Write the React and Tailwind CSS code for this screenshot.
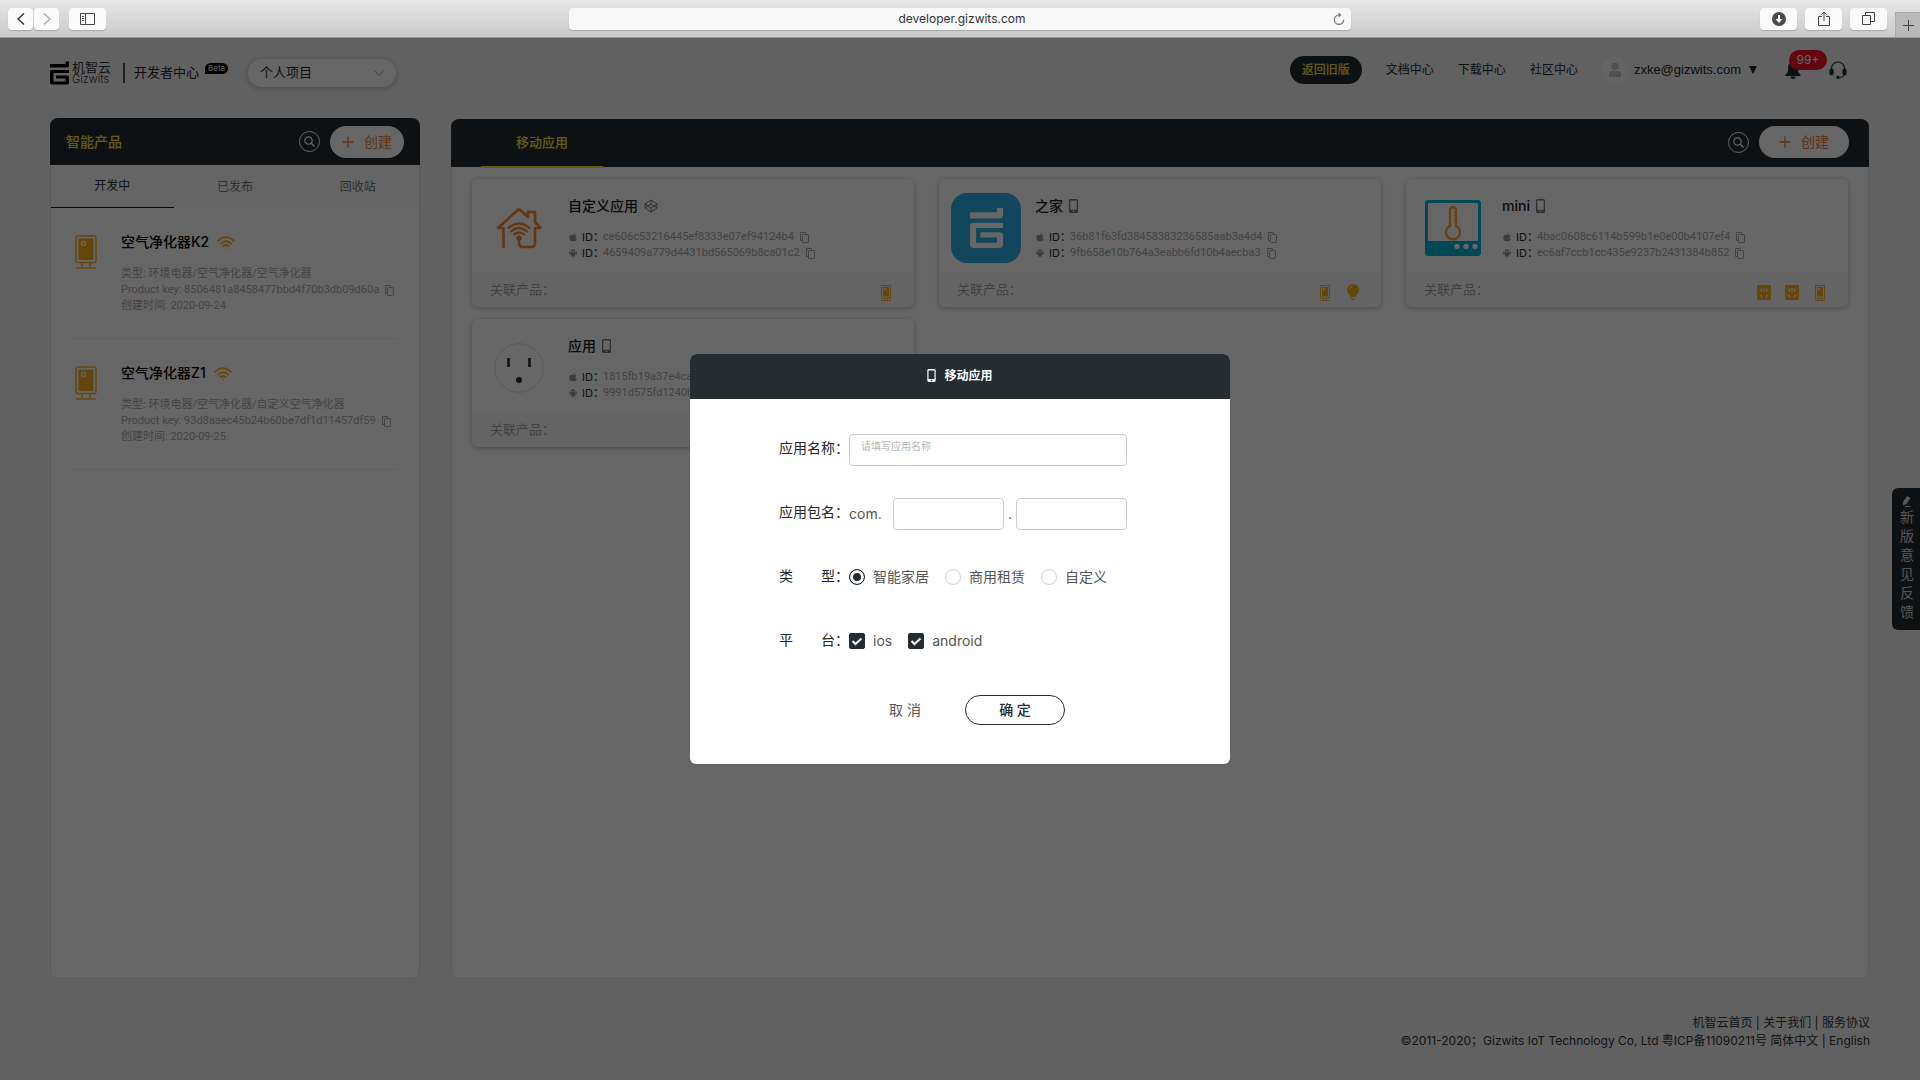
import React from "react";
import { FaApple } from "react-icons/fa";
import { AiFillAndroid } from "react-icons/ai";

const products = [
  { name: "空气净化器K2", type: "环境电器/空气净化器/空气净化器", key: "8506481a8458477bbd4f70b3db09d60a", date: "2020-09-24" },
  { name: "空气净化器Z1", type: "环境电器/空气净化器/自定义空气净化器", key: "93d8aaec45b24b60be7df1d11457df59", date: "2020-09-25" },
];

const apps = [
  { name: "自定义应用", art: HouseArt, badge: CustomIcon, ios: "ce606c53216445ef8333e07ef94124b4", android: "4659409a779d4431bd565069b8ca01c2", linked: [PurifierMini] },
  { name: "之家", art: GizwitsArt, badge: PhoneIcon, ios: "36b81f63fd38458383236585aab3a4d4", android: "9fb658e10b764a3eabb6fd10b4aecba3", linked: [PurifierMini, BulbMini] },
  { name: "mini", art: ThermoArt, badge: PhoneIcon, ios: "4bac0608c6114b599b1e0e00b4107ef4", android: "ec6af7ccb1cc435e9237b2431384b852", linked: [PanelMini, PanelMini, PurifierMini] },
  { name: "应用", art: SocketArt, badge: PhoneIcon, ios: "1815fb19a37e4ca7b02c6d1f8e935a47", android: "9991d575fd1240b6a83e5c7d20f4b916", linked: [] },
];

function GMark({ className }) {
  return (
    <svg viewBox="0 0 38 46" className={className} fill="currentColor" aria-hidden="true">
      <path d="M0 5h31V0h7v8q0 4-4 4H0z" />
      <path d="M4 17h34v6H7v17h24v-6H12v-6h22q4 0 4 4v10q0 4-4 4H4q-4 0-4-4V21q0-4 4-4z" />
    </svg>
  );
}

function HouseArt() {
  return (
    <svg viewBox="0 0 46 42" className="h-[42px] w-[46px]" fill="none" stroke="#fc8427" strokeWidth="2.600" strokeLinecap="round" strokeLinejoin="round" aria-hidden="true">
      <path d="M7.500 40V21H2L23 2l9 8V5h7v10l5.500 6H39v15q0 4-4 4h-8q-4 0-4-4v-5" />
      <path d="M12.500 21q10.500-9 21 0M15 24.500q8-7 16 0M18 27.500q5-4 10 0" strokeWidth="2.200" />
      <circle cx="23" cy="31" r="2" fill="#fc8427" strokeWidth="1.500" />
    </svg>
  );
}

function GizwitsArt() {
  return (
    <div className="flex size-[70px] items-center justify-center rounded-2xl bg-[#2bb0e8] text-white">
      <GMark className="h-10 w-[33px]" />
    </div>
  );
}

function ThermoArt() {
  return (
    <svg viewBox="0 0 56 56" className="size-14" aria-hidden="true">
      <rect width="56" height="56" rx="3" fill="#00b4d8" />
      <rect x="3" y="3" width="50" height="38" rx="1.500" fill="#fff" />
      <path d="M25 10a3 3 0 0 1 6 0v16a7 7 0 1 1-6 0z" fill="none" stroke="#f9a72b" strokeWidth="2.400" />
      <path d="M29 12h2M29 15h2M29 18h2M29 21h2" stroke="#f9a72b" strokeWidth="1.500" />
      <g fill="#fff"><circle cx="32" cy="46.500" r="2.700" /><circle cx="41" cy="46.500" r="2.700" /><circle cx="50" cy="46.500" r="2.700" /></g>
    </svg>
  );
}

function SocketArt() {
  return (
    <svg viewBox="0 0 50 50" className="size-[50px]" aria-hidden="true">
      <circle cx="25" cy="25" r="24.300" fill="#fff" stroke="#dcdcdc" />
      <path d="M14.500 15v9M35.500 15v9" stroke="#252c32" strokeWidth="2.600" />
      <circle cx="25" cy="37" r="3" fill="#252c32" />
    </svg>
  );
}

function PhoneIcon({ className = "h-3.5 w-[9px] text-[#777]" }) {
  return (
    <svg viewBox="0 0 9 14" className={className} fill="currentColor" aria-hidden="true">
      <path fillRule="evenodd" d="M1.500 0h6Q9 0 9 1.500v11Q9 14 7.500 14h-6Q0 14 0 12.500v-11Q0 0 1.500 0zM1.300 1.500v9.300h6.400V1.500zM4.500 11.600a.8.8 0 1 0 0 1.600.8.8 0 0 0 0-1.600z" />
    </svg>
  );
}

function CustomIcon() {
  return (
    <svg viewBox="0 0 14 14" className="size-3.5" fill="none" stroke="#777" strokeWidth="1" strokeLinejoin="round" aria-hidden="true">
      <path d="M7 1l6 4v4l-6 4-6-4V5zM7 1v4M7 9v4M1 5l6 4 6-4M1 9l6-4 6 4" />
    </svg>
  );
}

function Purifier() {
  return (
    <svg viewBox="0 0 22 34" className="h-[34px] w-[22px]" fill="none" stroke="#f9b233" strokeWidth="1.500" aria-hidden="true">
      <rect x="1" y="1" width="20" height="26.500" rx="2" />
      <rect x="3.500" y="3.500" width="15" height="21.500" rx="1" fill="#f9b01e" stroke="none" />
      <circle cx="8.500" cy="8.500" r="2.300" fill="#fff4d8" stroke="#fff" strokeWidth="1" />
      <circle cx="8.500" cy="8.500" r="1.200" fill="#f9b01e" stroke="none" />
      <path d="M7 28v4M15 28v4M1 33h20" />
    </svg>
  );
}

function PurifierMini() {
  return (
    <svg viewBox="0 0 10 16" className="h-4 w-2.5" aria-hidden="true">
      <rect x=".5" y=".5" width="9" height="12.500" fill="none" stroke="#f9b233" />
      <path d="M2 2h6v9.500H2z" fill="#f9b01e" />
      <path d="M3 3h1.500v2H3z" fill="#fff" />
      <path d="M3.500 13v2.500M6.500 13v2.500M0 15.500h10" stroke="#f9b233" />
    </svg>
  );
}

function BulbMini() {
  return (
    <svg viewBox="0 0 12 17" className="h-[17px] w-3" aria-hidden="true">
      <path d="M6 0a6 6 0 0 1 6 6c0 2.500-2 4-3.500 7h-5C2 10 0 8.500 0 6a6 6 0 0 1 6-6z" fill="#f9b01e" />
      <path d="M2.500 5Q3 3 5 2.500" stroke="#fff" fill="none" />
      <path d="M4 14h4v1L7 16.500H5L4 15z" fill="#ccc" />
    </svg>
  );
}

function PanelMini() {
  return (
    <svg viewBox="0 0 14 15" className="h-[15px] w-3.5" aria-hidden="true">
      <rect width="14" height="15" rx="1" fill="#f9b01e" />
      <path d="M3 5l2-2v4zM11 5L9 3v4zM6.500 3v4M7.500 3v4" fill="#fff3d0" stroke="#fff3d0" strokeWidth=".5" />
      <path d="M3.500 9.500l1.500 3M10.500 9.500l-1.500 3" stroke="#fff3d0" strokeWidth="1.500" />
    </svg>
  );
}

function CopyIcon() {
  return (
    <svg viewBox="0 0 9 11" className="h-[11px] w-[9px]" fill="none" stroke="currentColor" strokeWidth="1" aria-hidden="true">
      <path d="M2.500 8.500h-2v-8h5v1" />
      <rect x="2.500" y="2.500" width="6" height="8" rx=".7" />
    </svg>
  );
}

function WifiIcon() {
  return (
    <svg viewBox="0 0 18 13" className="h-[13px] w-[18px]" fill="none" stroke="#f9b01e" strokeWidth="1.700" strokeLinecap="round" aria-hidden="true">
      <path d="M1 4.800q8-7.500 16 0M3.800 7.600q5.200-4.700 10.400 0M6.500 10q2.500-2 5 0" />
      <circle cx="9" cy="12" r=".8" fill="#f9b01e" stroke="none" />
    </svg>
  );
}

function SearchButton() {
  return (
    <button type="button" aria-label="搜索" className="flex size-[21px] items-center justify-center rounded-full border border-white text-white">
      <svg viewBox="0 0 11 11" className="size-[11px]" fill="none" stroke="currentColor" strokeWidth="1.200" aria-hidden="true">
        <circle cx="4.500" cy="4.500" r="3.700" />
        <path d="M7.200 7.200L10.500 10.500" strokeWidth="1.500" />
      </svg>
    </button>
  );
}

function CreateButton({ className }) {
  return (
    <button type="button" className={`flex h-8 items-center justify-center gap-2.5 rounded-full bg-white text-sm text-[#f07d2d] ${className}`}>
      <svg viewBox="0 0 12 12" className="size-3" stroke="currentColor" strokeWidth="1.400" aria-hidden="true"><path d="M6 .5v11M.5 6h11" /></svg>
      创建
    </button>
  );
}

function ChromeButton({ label, className, children }) {
  return (
    <button type="button" aria-label={label} className={`flex h-[22px] items-center justify-center rounded bg-[#fafafa] text-[#444] shadow-[0_1px_1px_#a8a8a8] ${className}`}>
      {children}
    </button>
  );
}

function BrowserBar() {
  return (
    <div className="flex h-[38px] shrink-0 items-center border-b border-[#979797] bg-linear-to-b from-[#e6e6e6] to-[#cacaca]">
      <div className="flex flex-1 items-center">
        <ChromeButton label="后退" className="ml-2 mr-px w-[25px]">
          <svg viewBox="0 0 8 12" className="h-3 w-2" fill="none" stroke="#333" strokeWidth="1.500"><path d="M7 .5L1 6l6 5.500" /></svg>
        </ChromeButton>
        <ChromeButton label="前进" className="w-[25px]">
          <svg viewBox="0 0 8 12" className="h-3 w-2" fill="none" stroke="#aaa" strokeWidth="1.500"><path d="M1 .5L7 6l-6 5.500" /></svg>
        </ChromeButton>
        <ChromeButton label="边栏" className="ml-2.5 w-[37px]">
          <svg viewBox="0 0 15 12" className="h-3 w-[15px]" fill="none" stroke="currentColor"><path d="M.5.500h14v11H.5zM5.500.500v11M2 3.500h2M2 5.500h2M2 7.500h2" /></svg>
        </ChromeButton>
      </div>
      <div className="flex h-[22px] w-[782px] items-center rounded bg-[#f8f8f8] px-1.5 shadow-[0_1px_1px_#a8a8a8]">
        <input aria-label="地址" defaultValue="developer.gizwits.com" className="min-w-0 flex-1 bg-transparent pl-4 text-center text-xs text-[#333] outline-none" />
        <button type="button" aria-label="刷新" className="text-[#777]">
          <svg viewBox="0 0 12 13" className="h-[13px] w-3" fill="none" stroke="currentColor" strokeWidth="1.200"><path d="M7 3H6a4.700 4.700 0 1 0 4.700 4.700" /><path d="M5.500.500L8.500 3l-3 2.500z" fill="currentColor" stroke="none" /></svg>
        </button>
      </div>
      <div className="flex h-full flex-1 items-center justify-end gap-2">
        <ChromeButton label="下载" className="w-[37px]">
          <svg viewBox="0 0 14 14" className="size-3.5"><circle cx="7" cy="7" r="7" fill="#4a4a4a" /><path d="M6 3h2v4h2.500L7 11 3.500 7H6z" fill="#fff" /></svg>
        </ChromeButton>
        <ChromeButton label="分享" className="w-[37px]">
          <svg viewBox="0 0 12 16" className="h-4 w-3" fill="none" stroke="currentColor"><path d="M4 5.500H.5v9h11v-9H8M6 10V1M3.500 3.500L6 1l2.500 2.500" /></svg>
        </ChromeButton>
        <ChromeButton label="标签页" className="w-[37px]">
          <svg viewBox="0 0 13 13" className="size-[13px]" fill="none" stroke="currentColor"><path d="M.5 3.500h8v9h-8zM3.500 3.500v-3h9v9h-4" /></svg>
        </ChromeButton>
        <button type="button" aria-label="新标签页" className="flex h-[25px] w-[25px] items-center justify-center self-end border-l border-t border-[#aaa] bg-[#b9b9b9]">
          <svg viewBox="0 0 11 11" className="size-[11px]" stroke="#444"><path d="M5.500 0v11M0 5.500h11" /></svg>
        </button>
      </div>
    </div>
  );
}

function SiteHeader() {
  return (
    <header className="flex h-20 items-center justify-between pl-[50px] pr-[73px]">
      <div className="flex items-center pb-[11px] text-[#1f2529]">
        <GMark className="h-6 w-[19px] text-black" />
        <div className="ml-[3px] flex flex-col text-[#333]">
          <span className="text-[13px] leading-[13px]">机智云</span>
          <span className="text-[11px] font-light leading-[11px]">Gizwits</span>
        </div>
        <span className="ml-3 h-5 w-0.5 bg-[#555]" />
        <span className="ml-[9px] text-[13px]">开发者中心</span>
        <span className="mb-2 ml-1.5 rounded-full rounded-bl-none bg-black px-[3px] text-[8px] leading-[11px] text-white">Beta</span>
        <div className="relative ml-5 flex items-center">
          <select aria-label="项目" className="h-7 w-[148px] appearance-none rounded-full bg-white px-3 text-[13px] shadow-[0_1px_6px_rgba(0,0,0,0.25)]">
            <option>个人项目</option>
          </select>
          <svg viewBox="0 0 10 6" className="pointer-events-none absolute right-3 h-1.5 w-2.5" fill="none" stroke="#999"><path d="M.5.500L5 5.500 9.500.500" /></svg>
        </div>
      </div>
      <nav className="flex items-center pb-4 text-xs text-[#1f2529]">
        <a href="#old" className="flex h-7 items-center rounded-full bg-[#252c32] px-3 font-medium text-[#fae52d]">返回旧版</a>
        <a href="#docs" className="ml-6">文档中心</a>
        <a href="#downloads" className="ml-6">下载中心</a>
        <a href="#community" className="ml-6">社区中心</a>
        <button type="button" className="ml-6 flex items-center font-['Liberation_Sans',sans-serif] text-[13px]">
          <svg viewBox="0 0 26 26" className="mr-1.5 size-[26px]" aria-hidden="true"><circle cx="13" cy="13" r="13" fill="#fafafa" /><circle cx="13" cy="9.500" r="3.800" fill="#c8c8c8" /><path d="M7 20v-3q0-3 3-3h6q3 0 3 3v3z" fill="#c8c8c8" /></svg>
          <span>zxke@gizwits.com</span>
          <svg viewBox="0 0 8 8" className="ml-2 size-2" fill="currentColor" aria-hidden="true"><path d="M0 0h8L4 8z" /></svg>
        </button>
        <button type="button" aria-label="通知" className="relative ml-7">
          <svg viewBox="0 0 16 17" className="h-[17px] w-4" fill="#252c32" aria-hidden="true"><path d="M8 0a5 5 0 0 1 5 5v4q0 2 2.500 3.500V14H.5v-1.500Q3 11 3 9V5a5 5 0 0 1 5-5zM5.500 14.500h5a2.500 2.500 0 0 1-5 0z" /></svg>
          <span className="absolute -top-3 left-1 flex h-5 w-[38px] items-center justify-center rounded-full bg-[#f5102a] text-xs text-white">99+</span>
        </button>
        <button type="button" aria-label="客服" className="ml-7">
          <svg viewBox="0 0 18 18" className="size-[18px]" fill="none" stroke="#252c32" strokeWidth="1.200" aria-hidden="true"><path d="M2.500 9V7.500a6.500 6.500 0 0 1 13 0V9M15.500 13q-.5 3-5 3.500" /><rect x="1" y="8" width="3" height="6" rx="1.500" fill="#252c32" /><rect x="14" y="8" width="3" height="6" rx="1.500" fill="#252c32" /><circle cx="9" cy="16.500" r="1.200" fill="#252c32" /></svg>
        </button>
      </nav>
    </header>
  );
}

function ProductItem({ item }) {
  return (
    <article className="mx-5 flex h-[131px] border-b border-[#f0f0f0] pl-1 pt-[25px]">
      <div className="w-[46px] shrink-0 pt-[2px]"><Purifier /></div>
      <div>
        <h3 className="flex h-[18px] items-center gap-2 text-sm font-medium text-black">{item.name}<WifiIcon /></h3>
        <div className="mt-[15px] whitespace-nowrap font-['Roboto','Noto_Sans_CJK_SC',sans-serif] text-[11px] leading-4 text-[#aaa]">
          <p>类型: {item.type}</p>
          <p className="flex items-center gap-1.5">Product key: {item.key}<CopyIcon /></p>
          <p>创建时间: {item.date}</p>
        </div>
      </div>
    </article>
  );
}

function ProductPanel() {
  return (
    <section className="flex w-[370px] shrink-0 flex-col rounded-lg border border-[#e2e2e2] bg-white">
      <div className="-mx-px -mt-px flex h-[47px] shrink-0 items-center rounded-t-lg bg-[#252c32] px-4">
        <h2 className="flex-1 text-sm font-medium text-[#fae52d]">智能产品</h2>
        <SearchButton />
        <CreateButton className="ml-2.5 w-[74px]" />
      </div>
      <div role="tablist" className="grid h-[43px] shrink-0 grid-cols-3 bg-[#fcfcfc] text-xs text-[#777]">
        <button type="button" role="tab" aria-selected="true" className="border-b border-[#111] text-[#252c32]">开发中</button>
        <button type="button" role="tab" aria-selected="false">已发布</button>
        <button type="button" role="tab" aria-selected="false">回收站</button>
      </div>
      {products.map((p) => <ProductItem key={p.key} item={p} />)}
    </section>
  );
}

function IdLine({ icon: Icon, value }) {
  return (
    <p className="flex items-center font-['Roboto','Noto_Sans_CJK_SC',sans-serif] text-[11px] leading-4 text-[#a6a6a6]">
      <Icon className="size-[10px] text-[#999]" aria-hidden="true" />
      <span className="ml-1 mr-px w-5 whitespace-nowrap font-['Inter','Noto_Sans_CJK_SC',sans-serif] text-[#252c32]">ID：</span>
      <span className="mr-1.5">{value}</span>
      <CopyIcon />
    </p>
  );
}

function AppCard({ app }) {
  const Art = app.art;
  const Badge = app.badge;
  return (
    <article className="overflow-hidden rounded-md bg-white shadow-[0_1px_5px_rgba(0,0,0,0.28)]">
      <div className="flex h-[93px] px-3 pt-3.5">
        <div className="flex size-[70px] shrink-0 items-center justify-center"><Art /></div>
        <div className="ml-3.5">
          <h3 className="mt-1 flex h-[18px] items-center gap-1.5 text-sm font-medium text-[#1a1a1a]">{app.name}<Badge /></h3>
          <div className="mt-3.5">
            <IdLine icon={FaApple} value={app.ios} />
            <IdLine icon={AiFillAndroid} value={app.android} />
          </div>
        </div>
      </div>
      <div className="flex h-[35px] items-center bg-[#fafafa] pl-[18px] pr-3.5 text-[13px] text-[#a6a6a6]">
        <span className="flex-1">关联产品：</span>
        {app.linked.map((Icon, i) => <span key={i} className="flex w-7 justify-center pt-1.5"><Icon /></span>)}
      </div>
    </article>
  );
}

function AppPanel() {
  return (
    <section className="mt-px min-w-0 flex-1 rounded-lg border border-[#e2e2e2] bg-white">
      <div className="-mx-px -mt-px flex h-12 items-center rounded-t-lg bg-[#252c32] pl-[30px] pr-5">
        <button type="button" className="-mb-px h-[49px] w-[122px] border-b-2 border-[#fae52d] text-[13px] font-medium text-[#fae52d]">移动应用</button>
        <div className="ml-auto flex items-center pb-0.5">
          <SearchButton />
          <CreateButton className="ml-2.5 w-[90px]" />
        </div>
      </div>
      <div className="grid grid-cols-3 gap-x-[25px] gap-y-3 px-5 pt-3">
        {apps.map((a) => <AppCard key={a.ios} app={a} />)}
      </div>
    </section>
  );
}

function FieldLabel({ text, htmlFor }) {
  const cls = "flex w-[70px] shrink-0 pb-1 text-sm text-[#252525]";
  const body = (
    <>
      <span className="flex w-14 justify-between">{[...text].map((c) => <span key={c}>{c}</span>)}</span>
      <span>：</span>
    </>
  );
  return htmlFor ? <label htmlFor={htmlFor} className={cls}>{body}</label> : <span className={cls}>{body}</span>;
}

const inputClass = "h-8 rounded border border-[#ccc] bg-white outline-none";

function Radio({ label, checked }) {
  return (
    <label className="flex items-center gap-2">
      <input type="radio" name="kind" defaultChecked={checked} className="size-4 appearance-none rounded-full border border-[#d0d0d0] bg-white checked:border-[#252c32] checked:bg-[#252c32] checked:shadow-[inset_0_0_0_3px_white]" />
      {label}
    </label>
  );
}

function Check({ label }) {
  return (
    <label className="flex items-center gap-2">
      <span className="relative flex">
        <input type="checkbox" defaultChecked className="peer size-4 appearance-none rounded-xs border border-[#252c32] checked:bg-[#252c32]" />
        <svg viewBox="0 0 16 16" className="pointer-events-none absolute inset-0 hidden size-4 peer-checked:block" fill="none" stroke="#fff" strokeWidth="2"><path d="M3.500 8l3 3 6-5.500" /></svg>
      </span>
      {label}
    </label>
  );
}

function Dialog() {
  return (
    <form role="dialog" aria-label="移动应用" className="w-[540px] overflow-hidden rounded-md bg-white" onSubmit={(e) => e.preventDefault()}>
      <div className="flex h-[45px] items-center justify-center gap-2 bg-[#252c32] pb-0.5 text-xs font-bold text-white">
        <PhoneIcon className="h-[13px] w-[9px]" />
        移动应用
      </div>
      <div className="flex flex-col gap-8 pl-[89px] pr-[103px] pt-[35px] text-sm text-[#555]">
        <div className="flex h-8 items-center">
          <FieldLabel text="应用名称" htmlFor="app-name" />
          <input id="app-name" placeholder="请填写应用名称" className={`${inputClass} min-w-0 flex-1 px-[11px] pb-2 text-[10px] placeholder:text-[#b5b5b5]`} />
        </div>
        <div className="flex h-8 items-center">
          <FieldLabel text="应用包名" htmlFor="package-company" />
          <span className="w-11">com.</span>
          <input id="package-company" className={`${inputClass} w-[111px] px-2`} />
          <span className="flex-1 text-center">.</span>
          <input aria-label="应用包名后缀" className={`${inputClass} w-[111px] px-2`} />
        </div>
        <div className="flex h-8 items-center">
          <FieldLabel text="类型" />
          <div className="flex gap-4 whitespace-nowrap pb-0.5">
            <Radio label="智能家居" checked />
            <Radio label="商用租赁" />
            <Radio label="自定义" />
          </div>
        </div>
        <div className="flex h-8 items-center">
          <FieldLabel text="平台" />
          <div className="flex gap-4 pb-0.5">
            <Check label="ios" />
            <Check label="android" />
          </div>
        </div>
      </div>
      <div className="flex items-center pb-[39px] pl-[165px] pt-[37px] text-sm">
        <button type="button" className="w-[100px] text-[#555]">取 消</button>
        <button type="submit" className="ml-2.5 h-[30px] w-[100px] rounded-full border border-[#252c32] font-medium text-[#252c32]">确 定</button>
      </div>
    </form>
  );
}

export default function App() {
  return (
    <div className="flex min-h-screen flex-col font-['Inter','Noto_Sans_CJK_SC',sans-serif]">
      <BrowserBar />
      <div className="relative flex flex-1 flex-col bg-[#f2f3f3]">
        <SiteHeader />
        <main className="flex flex-1 gap-[31px] pl-[50px] pr-[51px]">
          <ProductPanel />
          <AppPanel />
        </main>
        <footer className="h-[101px] pr-[50px] pt-[35px] text-right text-xs leading-[18px] text-[#333]">
          <p><a href="#home">机智云首页</a> | <a href="#about">关于我们</a> | <a href="#terms">服务协议</a></p>
          <p>©2011-2020；Gizwits IoT Technology Co, Ltd 粤ICP备11090211号 <a href="#zh">简体中文</a> | <a href="#en">English</a></p>
        </footer>
        <button type="button" className="absolute right-0 top-[450px] flex h-[142px] w-7 flex-col items-center rounded-l-md bg-[#252c32] pl-0.5 pt-2 text-sm leading-[19px] text-[#d5d5d5]">
          <svg viewBox="0 0 10 11" className="h-[11px] w-2.5" fill="#ddd" aria-hidden="true"><path d="M5 0l3.500 2L4.500 8 1 9.500V6zM3 10h5v1H3z" /></svg>
          {[..."新版意见反馈"].map((c) => <span key={c}>{c}</span>)}
        </button>
        <div className="absolute inset-0 flex items-center justify-center bg-black/60">
          <Dialog />
        </div>
      </div>
    </div>
  );
}
